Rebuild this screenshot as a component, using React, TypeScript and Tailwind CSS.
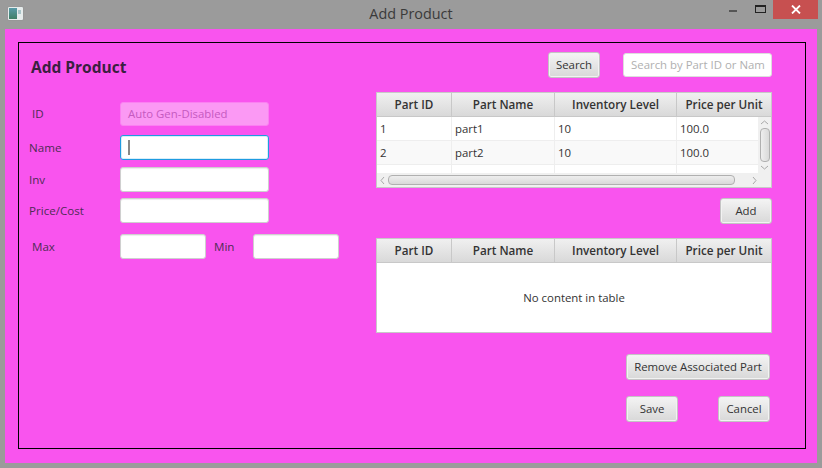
const font = "font-['Open_Sans','Noto_Sans',sans-serif]";

const btn =
  'flex items-center justify-center rounded-[3px] border border-[#c4c4c4] bg-gradient-to-b from-[#f4f4f4] to-[#d8d8d8] text-[11.4px] text-[#333] shadow-[inset_0_0_0_1px_#f2f2f2]';

const fieldCls =
  'rounded-[3px] border border-[#cfcfcf] bg-white shadow-[inset_0_1px_1px_#eee]';

const columns = [
  { label: 'Part ID', width: 'w-[75px]' },
  { label: 'Part Name', width: 'w-[103px]' },
  { label: 'Inventory Level', width: 'w-[122px]' },
  { label: 'Price per Unit', width: 'flex-1' },
];

function TableHeader({ height }: { height: string }) {
  return (
    <div className={`flex ${height} shrink-0 border-b border-[#c8c8c8]`}>
      {columns.map((c) => (
        <div
          key={c.label}
          className={`${c.width} flex items-center justify-center border-r border-[#c8c8c8] bg-gradient-to-b from-[#f0f0f0] to-[#d9d9d9] text-[11.7px] font-semibold text-[#333] last:border-r-0`}
        >
          {c.label}
        </div>
      ))}
    </div>
  );
}

function Row({ id, name, striped }: { id: string; name: string; striped?: boolean }) {
  const cell = 'flex items-center border-r border-[#eee] pl-[3px]';
  return (
    <div className={`flex h-[24px] border-b border-[#eee] text-[11.4px] text-[#333] ${striped ? 'bg-[#f9f9f9]' : 'bg-white'}`}>
      <div className={`${cell} w-[75px]`}>{id}</div>
      <div className={`${cell} w-[103px]`}>{name}</div>
      <div className={`${cell} w-[122px]`}>10</div>
      <div className={`${cell} flex-1 border-r-0`}>100.0</div>
    </div>
  );
}

function Chevron({ d }: { d: string }) {
  return (
    <svg width="9" height="9" viewBox="0 0 9 9" fill="none" stroke="#a8a8a8" strokeWidth="1">
      <path d={d} />
    </svg>
  );
}

function PartsTable() {
  return (
    <div className="flex h-[96px] flex-col border border-[#c8c8c8] bg-white">
      <TableHeader height="h-[24px]" />
      <div className="flex min-h-0 flex-1">
        <div className="flex-1 overflow-hidden">
          <Row id="1" name="part1" />
          <Row id="2" name="part2" striped />
          <div className="flex h-[9px]">
            <div className="w-[75px] border-r border-[#eee]" />
            <div className="w-[103px] border-r border-[#eee]" />
            <div className="w-[122px] border-r border-[#eee]" />
          </div>
        </div>
        <div className="flex w-[13px] flex-col items-center bg-[#f0f0f0]">
          <div className="flex h-[11px] items-center justify-center">
            <Chevron d="M1 6 L4.5 3 L8 6" />
          </div>
          <div className="h-[34px] w-[10px] rounded-[4px] border border-[#b0b0b0] bg-gradient-to-r from-[#eee] to-[#d9d9d9]" />
          <div className="mt-auto flex h-[11px] items-center justify-center">
            <Chevron d="M1 3 L4.5 6 L8 3" />
          </div>
        </div>
      </div>
      <div className="flex h-[14px] shrink-0 items-center bg-[#f0f0f0]">
        <div className="flex w-[11px] justify-center">
          <Chevron d="M6 1 L3 4.5 L6 8" />
        </div>
        <div className="h-[10px] w-[347px] rounded-[4px] border border-[#b0b0b0] bg-gradient-to-b from-[#eee] to-[#d9d9d9]" />
        <div className="ml-[15px] flex w-[9px] justify-center">
          <Chevron d="M3 1 L6 4.5 L3 8" />
        </div>
      </div>
    </div>
  );
}

function EmptyTable() {
  return (
    <div className="mt-[14px] flex h-[95px] flex-col border border-[#c8c8c8] bg-white">
      <TableHeader height="h-[24px]" />
      <div className="flex flex-1 items-center justify-center text-[11.4px] text-[#333]">No content in table</div>
    </div>
  );
}

function Label({ children, className = '' }: { children: string; className?: string }) {
  return <span className={`text-[11.6px] text-[#4f2c55] ${className}`}>{children}</span>;
}

function AppIcon() {
  return (
    <div className="flex h-[13px] w-[15px] gap-[1px] rounded-[1px] bg-[#e6ecec] p-[1px] shadow-[0_0_1px_#777]">
      <div className="w-[8px] bg-gradient-to-b from-[#5a9aa8] to-[#3f7f66]" />
      <div className="mt-[2px] h-[4px] w-[3px] bg-[#a8c4c8]" />
    </div>
  );
}

export default function App() {
  return (
    <div className={`${font} flex h-[468px] w-[822px] flex-col overflow-hidden bg-[#9b9b9b]`}>
      <div className="grid h-[29px] shrink-0 grid-cols-[1fr_auto_1fr] items-start">
        <div className="ml-[8px] mt-[7px]">
          <AppIcon />
        </div>
        <div className="flex h-[28px] items-center justify-center text-[14.4px] text-[#3a3a3a]">Add Product</div>
        <div className="flex h-[19px] items-center justify-end pr-[4px]">
          <div className="mt-[3px] h-[2px] w-[8px] bg-[#555]" />
          <div className="ml-[18px] mt-[-2px] h-[8px] w-[11px] border border-t-2 border-[#222]" />
          <div className="ml-[7px] flex h-[19px] w-[45px] items-center justify-center bg-[#c75050]">
            <svg width="10" height="9" viewBox="0 0 10 9" stroke="white" strokeWidth="1.8" fill="none">
              <path d="M1 0.5 L9 8.5 M9 0.5 L1 8.5" />
            </svg>
          </div>
        </div>
      </div>

      <div className="mx-[5px] mb-[5px] flex-1 bg-[#f954ee] pb-[14px] pl-[13px] pr-[11px] pt-[13px]">
        <div className="flex h-full border border-black">
          <div className="w-[357px] shrink-0 pl-[12px]">
            <h1 className="mt-[13px] h-[22px] text-[15.5px] font-bold leading-[22px] text-[#3a2040]">Add Product</h1>

            <div className="mt-[24px] flex h-[24px] items-center">
              <Label className="w-[89px] pl-[1px]">ID</Label>
              <div className="flex h-[24px] w-[149px] items-center rounded-[3px] border border-[#fb80f2] bg-[#fb99f4] pl-[7px] text-[11.4px] text-[#c55ac0]">
                Auto Gen-Disabled
              </div>
            </div>

            <div className="mt-[9px] flex h-[25px] items-center">
              <Label className="-ml-[2px] w-[91px]">Name</Label>
              <div className="flex h-[25px] w-[149px] items-center rounded-[3px] border border-[#1f9ce0] bg-white pl-[7px] shadow-[inset_0_0_0_1px_#d8eefa]">
                <div className="h-[15px] w-[2px] bg-[#888]" />
              </div>
            </div>

            <div className="mt-[7px] flex h-[25px] items-center">
              <Label className="-ml-[2px] w-[91px]">Inv</Label>
              <div className={`${fieldCls} h-[25px] w-[149px]`} />
            </div>

            <div className="mt-[6px] flex h-[25px] items-center">
              <Label className="-ml-[2px] w-[91px]">Price/Cost</Label>
              <div className={`${fieldCls} h-[25px] w-[149px]`} />
            </div>

            <div className="mt-[11px] flex h-[25px] items-center">
              <Label className="w-[89px] pl-[1px]">Max</Label>
              <div className={`${fieldCls} h-[25px] w-[86px]`} />
              <Label className="ml-[8px] w-[39px]">Min</Label>
              <div className={`${fieldCls} h-[25px] w-[86px]`} />
            </div>
          </div>

          <div className="w-[396px] shrink-0 pt-[9px]">
            <div className="flex h-[26px] items-center">
              <div className={`${btn} ml-[172px] h-[26px] w-[52px]`}>Search</div>
              <div className="ml-[23px] flex h-[24px] w-[149px] items-center overflow-hidden whitespace-nowrap rounded-[3px] border border-[#ddd] bg-white pl-[7px] text-[11.4px] text-[#b0b0b0]">
                Search by Part ID or Nam
              </div>
            </div>
            <div className="mt-[14px]">
              <PartsTable />
            </div>
            <div className="mt-[10px] flex justify-end">
              <div className={`${btn} h-[26px] w-[52px]`}>Add</div>
            </div>
            <EmptyTable />
            <div className="mt-[21px] flex justify-end pr-[2px]">
              <div className={`${btn} h-[26px] w-[144px]`}>Remove Associated Part</div>
            </div>
            <div className="mt-[16px] flex justify-end gap-[40px] pr-[2px]">
              <div className={`${btn} h-[26px] w-[52px]`}>Save</div>
              <div className={`${btn} h-[26px] w-[52px]`}>Cancel</div>
            </div>
          </div>
        </div>
      </div>
    </div>
  );
}
